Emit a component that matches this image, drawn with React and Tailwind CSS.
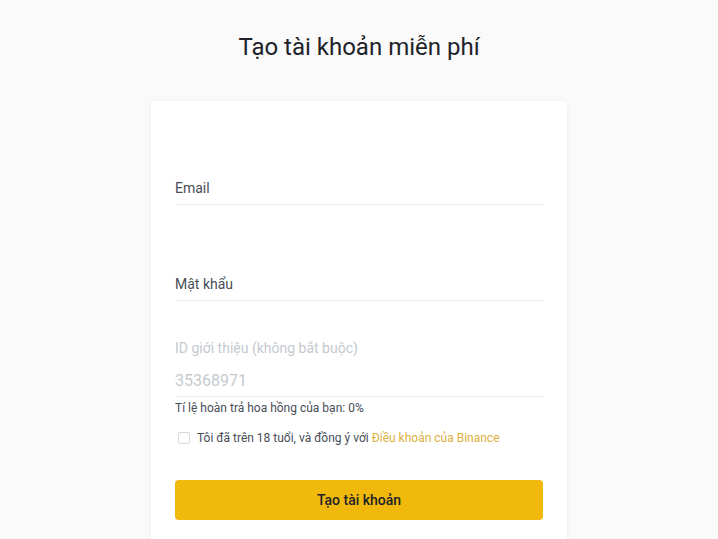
export default function App() {
    const font = { fontFamily: 'Roboto, "Noto Sans", Arial, sans-serif' }
    return (
        <div className="min-h-[539px] bg-[#fafafa] overflow-hidden" style={font}>
            <h1 className="mt-[31px] text-center text-[24px] leading-[32px] font-normal text-[#1e2329]">
                Tạo tài khoản miễn phí
            </h1>
            <div className="mx-auto mt-[38px] w-[416px] h-[460px] rounded bg-white px-6 pt-[77px] shadow-[0_0_6px_rgba(0,0,0,0.06)]">
                <div className="border-b border-[#eaecef] pb-[6px] text-[14px] leading-[20px] text-[#474d57]">
                    Email
                </div>
                <div className="mt-[69px] border-b border-[#eaecef] pb-[6px] text-[14px] leading-[20px] text-[#474d57]">
                    Mật khẩu
                </div>
                <div className="mt-[37px] text-[14px] leading-[20px] text-[#c5c9cf]">
                    ID giới thiệu (không bắt buộc)
                </div>
                <div className="mt-[11px] border-b border-[#eaecef] pb-[3px] text-[16px] leading-[24px] text-[#c5c9cf]">
                    35368971
                </div>
                <div className="mt-[3px] text-[12px] leading-[16px] text-[#474d57]">
                    Tí lệ hoàn trả hoa hồng của bạn: 0%
                </div>
                <div className="mt-[12px] flex items-center h-5 text-[12px] text-[#474d57]">
                    <span className="ml-[3px] mr-[7px] h-3 w-3 rounded-[2px] border border-[#d5d8dc]" />
                    <span>
                        Tôi đã trên 18 tuổi, và đồng ý với{" "}
                        <span className="text-[#dcb13f]">Điều khoản của Binance</span>
                    </span>
                </div>
                <button className="mt-[32px] h-10 w-full rounded bg-[#f0b90b] text-[14px] font-medium text-[#1e2329]">
                    Tạo tài khoản
                </button>
            </div>
        </div>
    )
}
